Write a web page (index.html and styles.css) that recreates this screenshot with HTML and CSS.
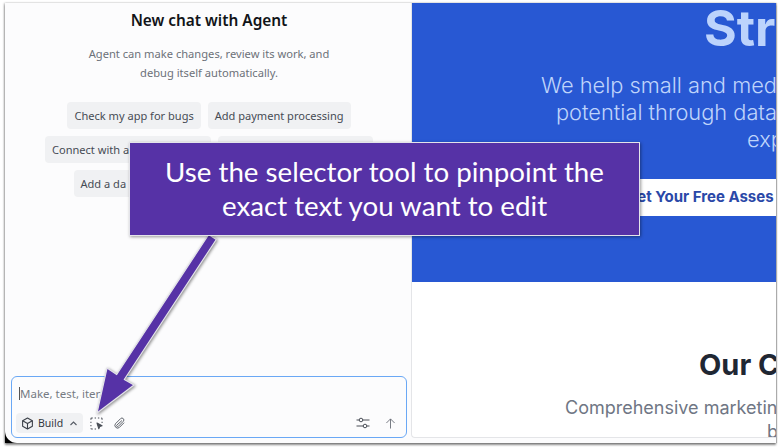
FILE: index.html
```html
<!DOCTYPE html>
<html lang="en">
<head>
    <meta charset="UTF-8">
    <title>New chat with Agent</title>
    <link rel="stylesheet" href="styles.css">
</head>
<body>
    <div class="window">
        <!-- Agent Panel -->
        <div class="agent-panel">
            <h1>New chat with Agent</h1>
            <p class="intro">Agent can make changes, review its work, and<br>debug itself automatically.</p>
            <div class="chips">
                <div class="chip-row">
                    <span class="chip">Check my app for bugs</span>
                    <span class="chip">Add payment processing</span>
                </div>
                <div class="chip-row">
                    <span class="chip chip-connect">Connect with a</span>
                    <span class="chip chip-sms"></span>
                </div>
                <div class="chip-row">
                    <span class="chip chip-data">Add a da</span>
                    <span class="chip chip-hidden"></span>
                </div>
            </div>
            <!-- Chat Input -->
            <div class="chat-box">
                <div class="chat-input"><span class="caret"></span>Make, test, itera</div>
                <div class="chat-tools">
                    <div class="build-btn">
                        <svg width="13" height="13" viewBox="0 0 24 24" fill="none" stroke="#3a3f47" stroke-width="2" stroke-linejoin="round"><path d="M12 2l9 5v10l-9 5-9-5V7z"/><path d="M3 7l9 5 9-5M12 12v10"/></svg>
                        <span>Build</span>
                        <svg class="chevron" width="9" height="9" viewBox="0 0 12 12" fill="none" stroke="#555b64" stroke-width="1.5"><path d="M2 8l4-4 4 4"/></svg>
                    </div>
                    <svg class="selector-icon" width="13" height="13" viewBox="0 0 14 14" fill="none" stroke="#4a4f57" stroke-width="1.1"><path d="M1 3V2q0-1 1-1h1M5 1h1.500M8.500 1H10M12 1q1 0 1 1v1M13 5v1.500M1 5v1.500M1 8.500V10M1 12q0 1 1 1h1M5 13h1.500"/><path d="M7.500 6.500l5.500 3-2.500.8-1 2.400z" fill="#4a4f57" stroke-linejoin="round"/></svg>
                    <svg width="13" height="13" viewBox="0 0 24 24" fill="none" stroke="#5d626a" stroke-width="1.800" stroke-linecap="round"><path d="M20 11l-8.500 8.500a5 5 0 0 1-7-7L14 3a3.400 3.400 0 0 1 5 5l-9.300 9.300a1.700 1.700 0 0 1-2.500-2.500L16 7"/></svg>
                    <div class="tools-right">
                        <svg width="14" height="12" viewBox="0 0 14 12" fill="none" stroke="#4a4f57" stroke-width="1"><path d="M0.500 3h13M0.500 9h13"/><circle cx="5" cy="3" r="1.800" fill="#fcfcfd"/><circle cx="9" cy="9" r="1.800" fill="#fcfcfd"/></svg>
                        <svg width="11" height="11" viewBox="0 0 12 12" fill="none" stroke="#6b7078" stroke-width="1"><path d="M6 11.500V1M1.500 5.500L6 1l4.500 4.500"/></svg>
                    </div>
                </div>
            </div>
        </div>
        <!-- Site Preview -->
        <div class="preview-wrap">
            <div class="preview">
                <div class="hero">
                    <div class="hero-title">Str</div>
                    <div class="hero-line line-a">We help small and med</div>
                    <div class="hero-line line-b">potential through data</div>
                    <div class="hero-line line-c">exp</div>
                    <div class="hero-btn">Get Your Free Asses</div>
                </div>
                <div class="services">
                    <div class="services-title">Our C</div>
                    <div class="services-line">Comprehensive marketin</div>
                    <div class="services-end">b</div>
                </div>
            </div>
        </div>
    </div>

    <!-- Callout + Arrow -->
    <svg class="arrow" width="160" height="200" viewBox="0 0 160 200">
        <path d="M154.300 8.500L62.300 148.500L72 154L35 182L45 137L54.700 143.500L146.700 3.500z" fill="#5632a6" stroke="#e4e4ea" stroke-width="1.200" stroke-linejoin="round"/>
    </svg>
    <div class="callout">Use the selector tool to pinpoint the<br>exact text you want to edit</div>
</body>
</html>
```
FILE: styles.css
```css
/* Basic Reset */
* {
    box-sizing: border-box;
    margin: 0;
    padding: 0;
}

body {
    width: 780px;
    height: 448px;
    padding: 3px 4px 5px 5px;
    overflow: hidden;
    background: #fff;
    font-family: "Noto Sans", Arial, sans-serif;
}

.window {
    display: flex;
    height: 440px;
    background: #000;
    box-shadow: 0 2px 2px rgba(0, 0, 0, 0.45), -1px 0 2px rgba(0, 0, 0, 0.25), 1px 0 1px rgba(0, 0, 0, 0.2);
}

/* Agent Panel */
.agent-panel {
    width: 406px;
    flex-shrink: 0;
    display: flex;
    flex-direction: column;
    align-items: center;
    padding: 8px 4px 5px 6px;
    background: #fcfcfd;
    border-radius: 0 0 0 12px;
}

.agent-panel h1 {
    font-size: 15.4px;
    line-height: 20px;
    font-weight: 600;
    color: #111418;
}

.intro {
    margin-top: 13px;
    font-size: 11.15px;
    line-height: 19px;
    text-align: center;
    color: #6c7179;
}

.chips {
    margin-top: 20px;
    display: flex;
    flex-direction: column;
    gap: 7px;
    align-items: center;
    flex-grow: 1;
}

.chip-row {
    display: flex;
    gap: 7px;
}

.chip {
    height: 27px;
    padding: 0 7px;
    display: flex;
    align-items: center;
    background: #f0f1f3;
    border-radius: 4px;
    font-size: 11.05px;
    color: #464b53;
    white-space: nowrap;
}

.chip-connect {
    width: 166px;
}

.chip-sms {
    width: 155px;
}

.chip-data {
    width: 100px;
}

.chip-hidden {
    width: 164px;
}

/* Chat Input */
.chat-box {
    width: 396px;
    height: 62px;
    padding: 8px 5px 4px 4px;
    background: #fcfcfd;
    border: 1px solid #6aa8f5;
    border-radius: 6px;
}

.chat-input {
    display: flex;
    align-items: center;
    height: 16px;
    margin-left: 3px;
    font-size: 11.5px;
    color: #767b83;
}

.caret {
    width: 1px;
    height: 13px;
    background: #555;
}

.chat-tools {
    display: flex;
    align-items: center;
    margin-top: 12px;
    gap: 10px;
}

.build-btn {
    display: flex;
    align-items: center;
    width: 67px;
    height: 20px;
    padding: 0 5px;
    gap: 4px;
    background: #f0f1f3;
    border-radius: 4px;
    font-size: 10.5px;
    color: #33373e;
}

.chevron {
    margin-left: auto;
}

.selector-icon {
    margin-left: -3px;
}

.tools-right {
    margin-left: auto;
    margin-right: 5px;
    display: flex;
    align-items: center;
    gap: 15px;
}

/* Site Preview */
.preview-wrap {
    flex-grow: 1;
    min-width: 0;
    padding: 0 0 5px 0;
    background: #fcfcfd;
}

.preview {
    height: 100%;
    overflow: hidden;
    background: #fff;
    border-radius: 0 0 0 4px;
    border: 1px solid #e4e5e8;
    border-width: 0 0 1px 1px;
    white-space: nowrap;
}

.hero {
    height: 279px;
    background: #2858d3;
    color: #bfd4fb;
    font-family: Inter, Arial, sans-serif;
}

.hero-title {
    margin-left: 292px;
    font-size: 50px;
    line-height: 51px;
    font-weight: 700;
    color: #bcd3fc;
}

.hero-line {
    font-size: 21.8px;
    line-height: 27px;
    font-weight: 300;
}

.line-a {
    margin-top: 18px;
    margin-left: 129px;
}

.line-b {
    margin-left: 144px;
}

.line-c {
    margin-left: 335px;
}

.hero-btn {
    margin: 26px 0 0 200px;
    padding-left: 14px;
    height: 37px;
    line-height: 36px;
    background: #fff;
    font-size: 15px;
    font-weight: 700;
    color: #2a48a8;
}

.services {
    font-family: Inter, Arial, sans-serif;
}

.services-title {
    margin: 65px 0 0 287px;
    font-size: 29px;
    line-height: 36px;
    font-weight: 700;
    color: #1f2733;
}

.services-line {
    margin: 13px 0 0 153px;
    font-size: 18px;
    line-height: 24px;
    color: #6f7684;
}

.services-end {
    margin-left: 355px;
    font-size: 18px;
    line-height: 24px;
    color: #6f7684;
}

/* Callout */
.callout {
    position: absolute;
    left: 129px;
    top: 142px;
    width: 511px;
    height: 94px;
    display: flex;
    align-items: center;
    justify-content: center;
    text-align: center;
    background: #5632a6;
    border: 1px solid #e4e4ea;
    box-shadow: 1px 1px 3px rgba(0, 0, 0, 0.4);
    font-family: Lato, Arial, sans-serif;
    font-size: 27.7px;
    line-height: 34px;
    color: #fff;
}

.arrow {
    position: absolute;
    left: 62px;
    top: 231px;
    filter: drop-shadow(1px 1px 1.5px rgba(0, 0, 0, 0.45));
}
```
